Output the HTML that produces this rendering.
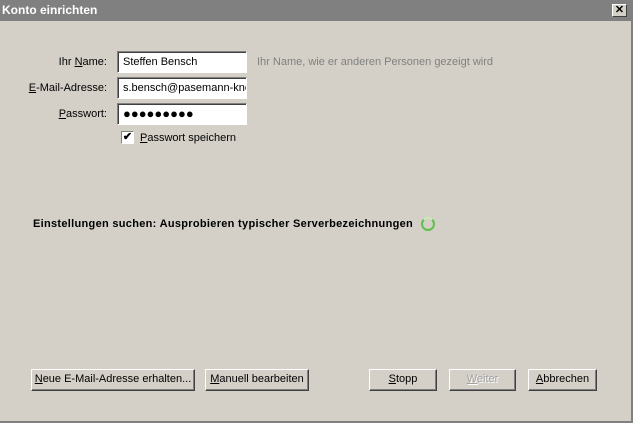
<!DOCTYPE html>
<html><head><style>
body{margin:0;width:633px;height:423px;background:#d4d0c8;font-family:"Liberation Sans",sans-serif;font-size:11px;position:relative;overflow:hidden}
.a{position:absolute}
.tb{left:0;top:0;width:633px;height:21px;background:#808080;color:#fff;font-weight:bold;font-size:12px;line-height:21px;padding-left:2px;box-sizing:border-box}
.x{left:612px;top:4px;width:13px;height:11px;background:#d4d0c8;border:1px solid;border-color:#fff #404040 #404040 #fff;font-size:11px;line-height:10px;text-align:center;color:#000;font-weight:bold}
.lbl{width:100px;text-align:right;left:7px}
.in{left:117px;width:130px;height:22px;background:#fff;box-sizing:border-box;border:1px solid;border-color:#808080 #fff #fff #808080;box-shadow:inset 1px 1px 0 #404040;padding:4px 0 0 5px;overflow:hidden;white-space:nowrap}
.bt{top:369px;height:22px;box-sizing:border-box;border:1px solid;border-color:#fff #404040 #404040 #fff;box-shadow:inset -1px -1px 0 #808080;text-align:center;line-height:19px}
.bot{left:0;top:421px;width:633px;height:2px;background:#808080}
</style></head><body>
<div class="a tb">Konto einrichten</div>
<div class="a x">✕</div>
<div class="a lbl" style="top:56px">Ihr <u>N</u>ame:</div>
<div class="a lbl" style="top:82px"><u>E</u>-Mail-Adresse:</div>
<div class="a lbl" style="top:108px"><u>P</u>asswort:</div>
<div class="a in" style="top:51px">Steffen Bensch</div>
<div class="a in" style="top:77px">s.bensch@pasemann-kne</div>
<div class="a in" style="top:103px;font-size:13px;padding-top:2px">●●●●●●●●●</div>
<div class="a" style="left:257px;top:56px;color:#808080">Ihr Name, wie er anderen Personen gezeigt wird</div>
<div class="a" style="left:121px;top:131px;width:13px;height:13px;box-sizing:border-box;background:#fff;border:1px solid;border-color:#808080 #fff #fff #808080;font-size:11px;line-height:11px;text-align:center;font-weight:bold">✔</div>
<div class="a" style="left:140px;top:132px"><u>P</u>asswort speichern</div>
<div class="a" style="left:33px;top:218px;font-weight:bold;letter-spacing:0.3px">Einstellungen suchen: Ausprobieren typischer Serverbezeichnungen</div>
<div class="a" style="left:421px;top:217px;width:10px;height:10px;border-radius:50%;border:2px solid #5fc04a;border-top-color:#c8e8b8"></div>
<div class="a bt" style="left:31px;width:164px"><u>N</u>eue E-Mail-Adresse erhalten...</div>
<div class="a bt" style="left:205px;width:104px"><u>M</u>anuell bearbeiten</div>
<div class="a bt" style="left:369px;width:68px"><u>S</u>topp</div>
<div class="a bt" style="left:449px;width:67px;color:#a0a0a0;text-shadow:1px 1px 0 #fff"><u>W</u>eiter</div>
<div class="a bt" style="left:528px;width:69px"><u>A</u>bbrechen</div>
<div class="a bot"></div>
<div class="a" style="left:631px;top:21px;width:2px;height:402px;background:#808080"></div>
</body></html>
